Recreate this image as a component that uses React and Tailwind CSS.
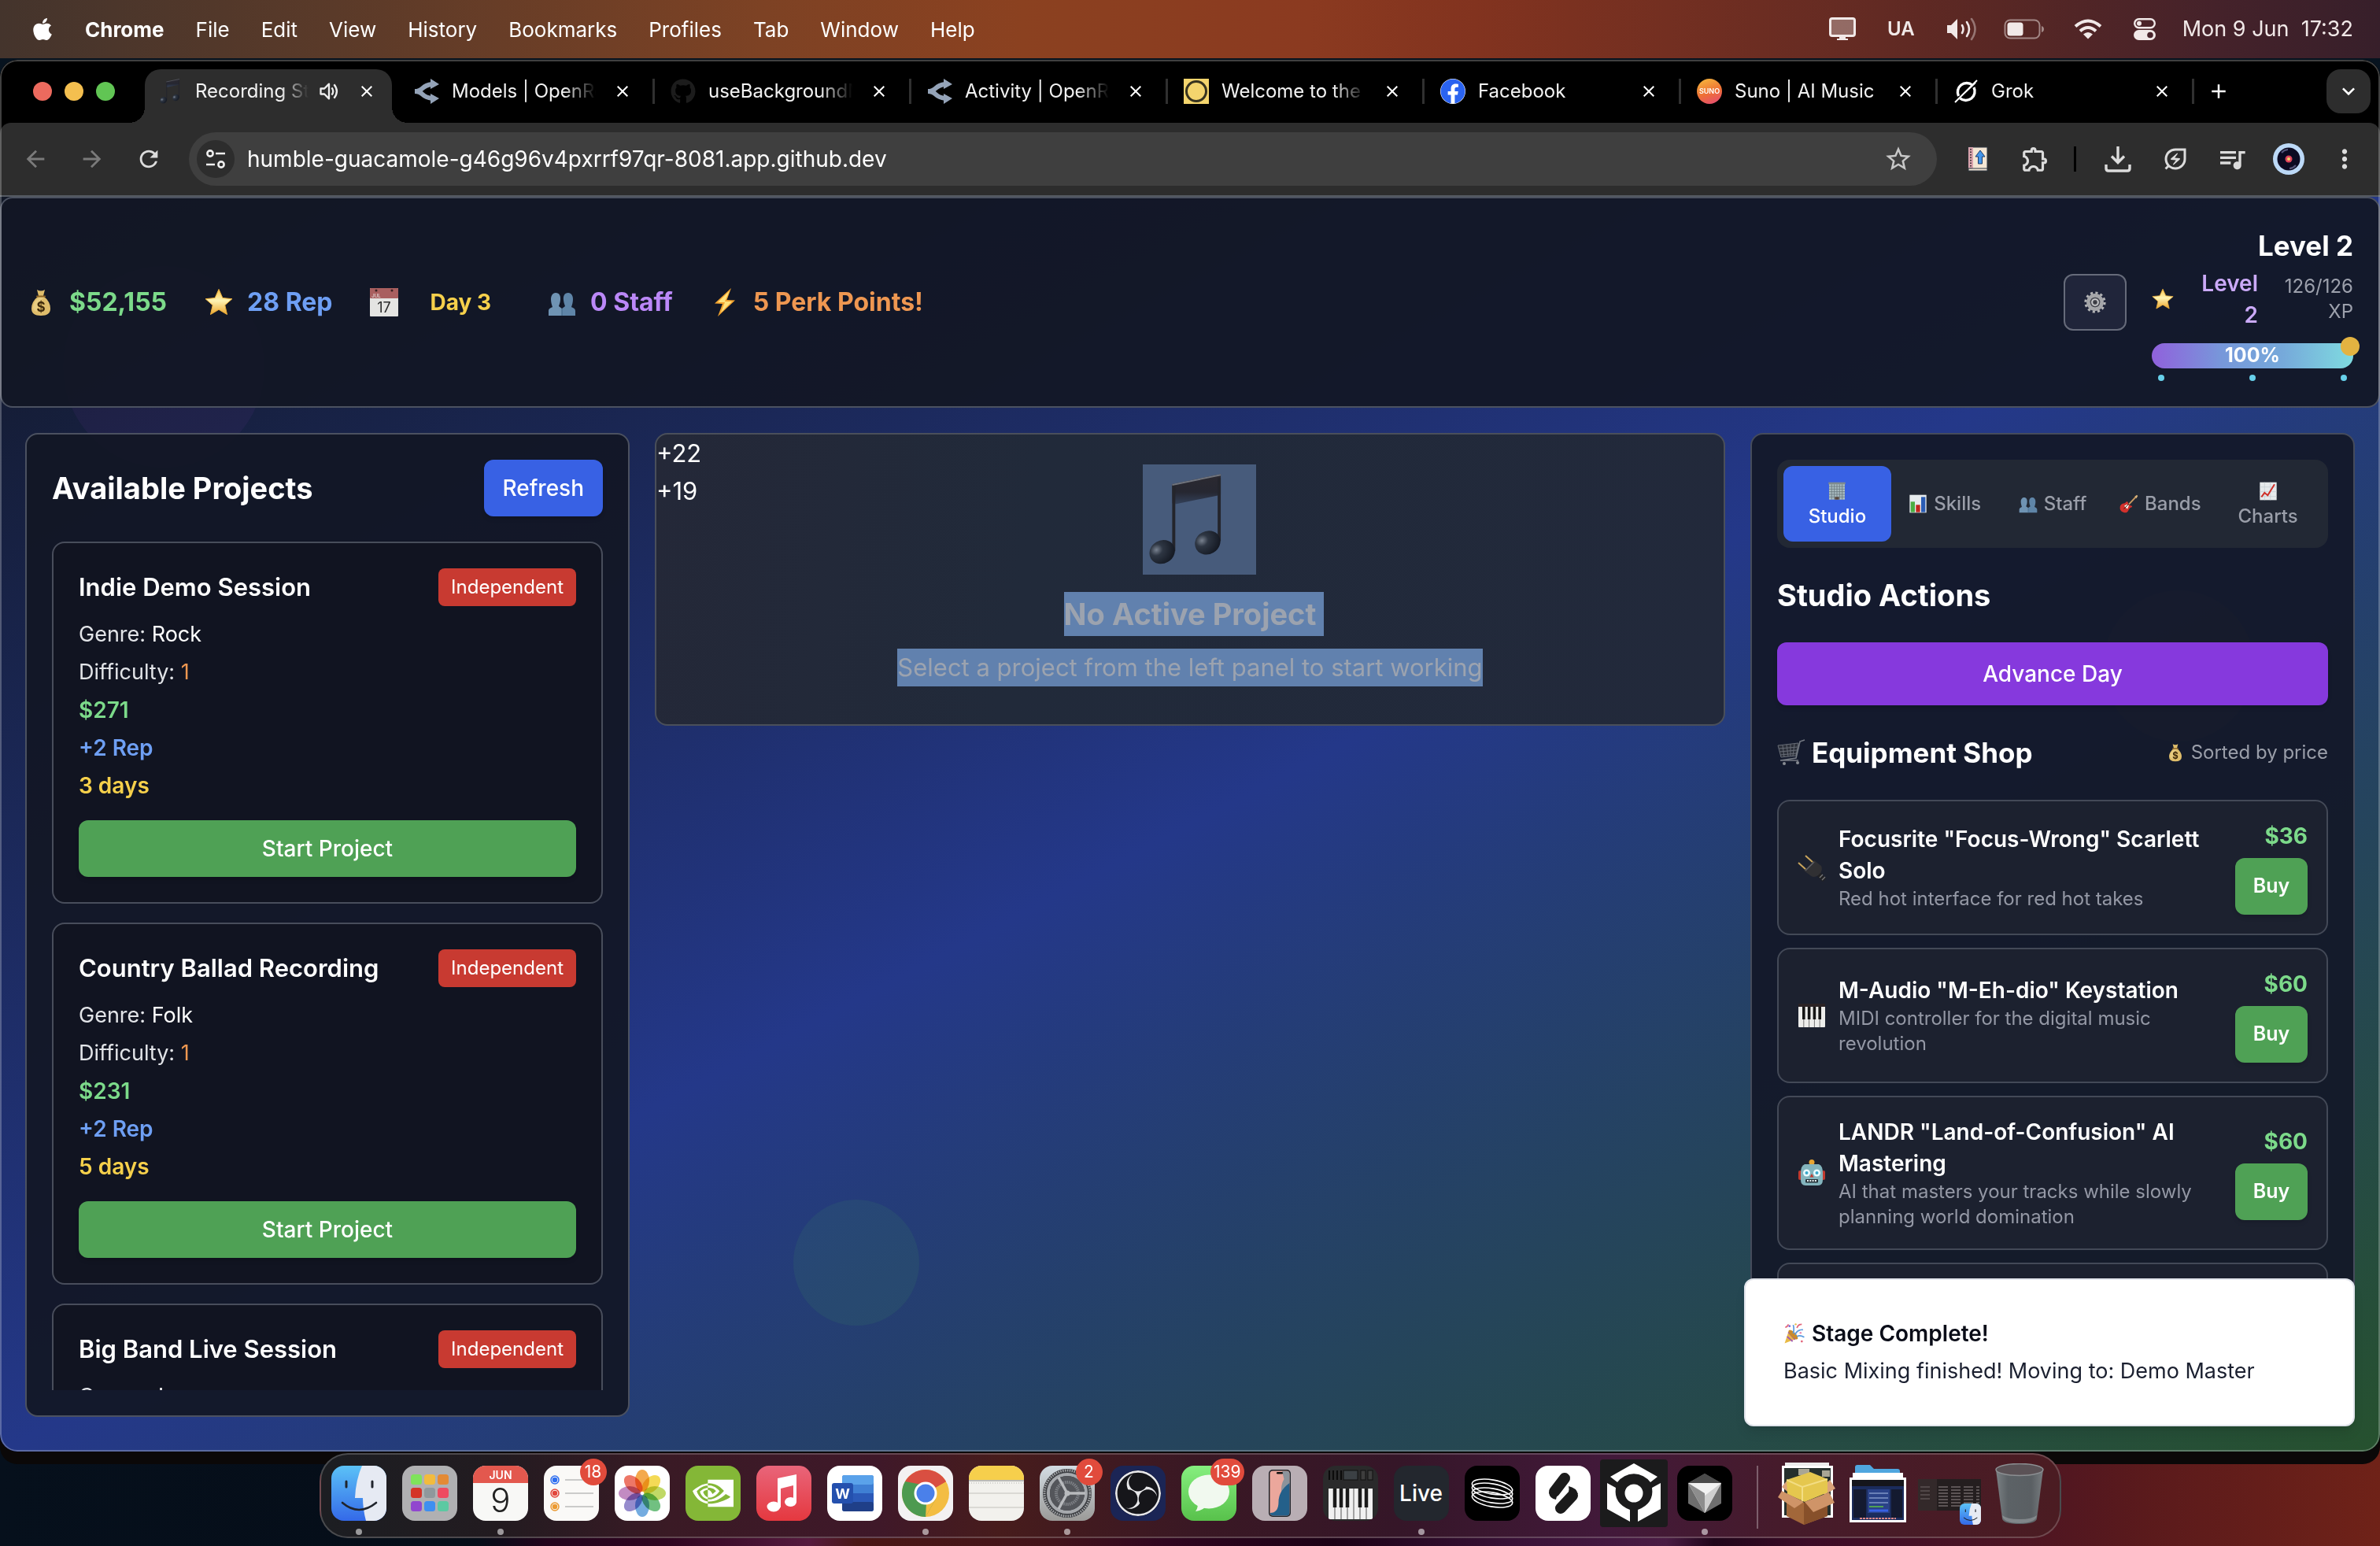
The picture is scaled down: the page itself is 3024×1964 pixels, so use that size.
import React from "react";
import {
  MdArrowBack,
  MdArrowForward,
  MdRefresh,
  MdStarBorder,
  MdOutlineExtension,
  MdOutlineEnergySavingsLeaf,
  MdQueueMusic,
  MdMoreVert,
  MdClose,
  MdAdd,
  MdExpandMore,
} from "react-icons/md";
import { FaApple, FaFacebook, FaGithub } from "react-icons/fa";
import { SiNvidia, SiObsstudio } from "react-icons/si";

/* ---------- small colour pictograms ---------- */

function Pic({ className = "size-9", children, label }) {
  return (
    <svg viewBox="0 0 36 36" className={`shrink-0 ${className}`} role="img" aria-label={label}>
      {children}
    </svg>
  );
}

const MoneyBag = ({ className }) => (
  <Pic className={className} label="money">
    <path d="M13 2q5 3 10 0l-2 8q9 7 9 16 0 9-12 9T6 26q0-9 9-16z" fill="#dfbd6b" />
    <path d="M8 24q1-8 8-12l6 0q-8 5-9 18-5-1-5-6z" fill="#efd791" opacity=".6" />
    <path d="M13 10.500h10" stroke="#8d6526" strokeWidth="2.200" strokeLinecap="round" />
    <text x="18" y="29.500" textAnchor="middle" fontFamily="Inter, sans-serif" fontWeight="700" fontSize="17" fill="#3f2b0c">$</text>
  </Pic>
);
const Star = ({ className }) => (
  <Pic className={className} label="star">
    <defs>
      <linearGradient id="starFill" x1="0" y1="0" x2="0" y2="1">
        <stop offset="0" stopColor="#f6c24a" />
        <stop offset=".45" stopColor="#fdf3b4" />
        <stop offset="1" stopColor="#eda62c" />
      </linearGradient>
    </defs>
    <path d="M18 1.500l4.900 11 12 1.200-9.100 8 2.700 11.800L18 27.300 7.500 33.500l2.700-11.800-9.100-8 12-1.200z" fill="url(#starFill)" stroke="#eeb03a" strokeLinejoin="round" />
  </Pic>
);
const Calendar = ({ className }) => (
  <Pic className={className} label="calendar">
    <rect x="0" y="0" width="36" height="36" rx="1" fill="#e4e4e2" />
    <rect x="0" y="0" width="36" height="13" rx="1" fill="#a95f5f" />
    <circle cx="8" cy="3" r="1.500" fill="#3c2222" />
    <circle cx="28" cy="3" r="1.500" fill="#3c2222" />
    <text x="8" y="12" textAnchor="middle" fontFamily="Inter, sans-serif" fontSize="6" fill="#eee">JUL</text>
    <text x="18" y="31" textAnchor="middle" fontFamily="Inter, sans-serif" fontSize="18" fill="#2c2c2c">17</text>
  </Pic>
);
const People = ({ className }) => (
  <Pic className={className} label="people">
    <g fill="#5f85a8">
      <path d="M10 6c5 0 6.500 4 6 9-.300 4-1.500 6-2 8l4 3v9H1v-6c0-3 3-4 5-5-1-3-2-6-2-10 0-4 2-8 6-8z" fill="#6f93b3" />
      <path d="M26 6c-5 0-6.500 4-6 9 .300 4 1.500 6 2 8l-4 3v9h17v-6c0-3-3-4-5-5 1-3 2-6 2-10 0-4-2-8-6-8z" />
    </g>
    <path d="M18 26v9" stroke="#3f6484" />
  </Pic>
);
const Bolt = ({ className }) => (
  <Pic className={className} label="bolt">
    <path d="M26 0L5 19.500l10 .500L9 36l22-20.500-10.500-.500z" fill="#f3a32e" />
    <path d="M24 3.500L9 18h9l-5 13 14-14h-9z" fill="#ffe27c" />
  </Pic>
);
const Cog = ({ className }) => (
  <Pic className={className} label="settings">
    <circle cx="18" cy="18" r="15.500" fill="none" stroke="#b3b4b6" strokeWidth="4" strokeDasharray="4 4.116" />
    <circle cx="18" cy="18" r="11" fill="none" stroke="#a5a6a9" strokeWidth="6" />
    <circle cx="18" cy="18" r="8" fill="#4a4b52" />
    <circle cx="18" cy="18" r="5" fill="none" stroke="#c9cacc" strokeWidth="2.500" />
    <circle cx="18" cy="18" r="2" fill="#34353c" />
  </Pic>
);
const Building = ({ className }) => (
  <Pic className={className} label="building">
    <rect x="3" y="3" width="30" height="31" fill="#a9bcc1" />
    <rect x="2" y="1" width="32" height="4" fill="#7f8b8f" />
    <path d="M3 9h30M3 14h30M3 19h30M3 24h30M3 29h30M8 5v29M13 5v29M18 5v29M23 5v29M28 5v29" stroke="#6a777d" strokeWidth="1.200" />
    <rect x="14" y="29" width="8" height="5" fill="#5a473d" />
  </Pic>
);
const Bars = ({ className }) => (
  <Pic className={className} label="bar chart">
    <rect x="2" y="1" width="32" height="34" fill="#e7ecee" />
    <rect x="4" y="14" width="8" height="20" fill="#4cae43" />
    <rect x="14" y="20" width="8" height="14" fill="#c1271f" />
    <rect x="24" y="5" width="8" height="29" fill="#2a5cb4" />
  </Pic>
);
const Guitar = ({ className }) => (
  <Pic className={className} label="guitar">
    <path d="M18 19L31 5" stroke="#c89a62" strokeWidth="3" />
    <path d="M29 4l4-3 2 2-3 5z" fill="#d8b37c" />
    <path d="M3 20c2-3 5-2 7-3 2-1 3-4 5-3 2 1 1 4 3 6s5 1 6 3-3 2-5 4c-2 3-3 8-8 8-5 0-10-4-10-8 0-3 0-5 2-7z" fill="#d3312c" />
    <path d="M9 22l6 6 3-7-4-2z" fill="#f4efe8" />
    <path d="M8 28l9-9" stroke="#36241c" strokeWidth="1.500" />
  </Pic>
);
const Trend = ({ className }) => (
  <Pic className={className} label="rising chart">
    <rect x="2" y="1" width="32" height="34" fill="#e6eaec" />
    <path d="M2 10h32M2 19h32M2 28h32M11 1v34M22 1v34" stroke="#c3ccd0" />
    <path d="M5 29l6-8 6 5L30 5" fill="none" stroke="#cf2f28" strokeWidth="3" />
  </Pic>
);
const Cart = ({ className }) => (
  <Pic className={className} label="cart">
    <path d="M1 9l26-3-3 16-19 2z" fill="#2b2f39" stroke="#686d77" />
    <path d="M2 13l24-2M3 17l22-2M4 21l21-2M7 9l2 15M12 8l2 15M17 7v15M22 7l-2 15" stroke="#666b75" strokeWidth="1" />
    <path d="M35 2l-6 2-5 21-20 3h23" fill="none" stroke="#757a83" strokeWidth="1.600" />
    <circle cx="9" cy="32" r="2" fill="#888c93" />
    <circle cx="26" cy="31" r="2" fill="#888c93" />
  </Pic>
);
const Plug = ({ className }) => (
  <Pic className={className} label="plug">
    <path d="M1 12l10 9M10 3l10 9" stroke="#c9a55c" strokeWidth="2" />
    <path d="M8 22l13-13 9 7c2 4 0 9-3 12-4 2-8 3-11 0z" fill="#303033" />
    <path d="M10 22L21 11" stroke="#606166" strokeWidth="1.500" />
    <path d="M27 27l7 7" stroke="#222224" strokeWidth="6" />
    <path d="M28 31l4-4M31 34l4-4" stroke="#77787c" strokeWidth="1.300" />
  </Pic>
);
const Piano = ({ className }) => (
  <Pic className={className} label="keyboard">
    <rect x="1" y="3" width="34" height="30" rx="1" fill="#ededeb" />
    <rect x="1" y="3" width="34" height="4" fill="#2b2325" />
    <path d="M7.800 7v26M14.600 7v26M21.400 7v26M28.200 7v26" stroke="#777" strokeWidth="1" />
    <path d="M7.800 7v16M14.600 7v16M21.400 7v16M28.200 7v16" stroke="#151515" strokeWidth="3.600" />
  </Pic>
);
const Robot = ({ className }) => (
  <Pic className={className} label="robot">
    <circle cx="18" cy="4.500" r="3.500" fill="#e8a532" />
    <rect x="1" y="15" width="4" height="12" rx="2" fill="#c1392e" />
    <rect x="31" y="15" width="4" height="12" rx="2" fill="#c1392e" />
    <path d="M9 7h18q5 2 5 11v9q0 7-6 7H10q-6 0-6-7v-9Q4 9 9 7z" fill="#83b4bd" />
    <circle cx="11.500" cy="18" r="4.500" fill="#e9fbff" />
    <circle cx="24.500" cy="18" r="4.500" fill="#e9fbff" />
    <circle cx="11.500" cy="18" r="2" fill="#38a7c8" />
    <circle cx="24.500" cy="18" r="2" fill="#38a7c8" />
    <path d="M18 19l2.500 4.500h-5z" fill="#c1392e" />
    <rect x="10" y="26" width="16" height="4.500" rx="1" fill="#263238" />
    <path d="M12 28h12" stroke="#e8f4f6" strokeWidth="2" strokeDasharray="2 1.300" />
  </Pic>
);
const Party = ({ className }) => (
  <Pic className={className} label="party">
    <path d="M2 34L9 13q9 4 14 13z" fill="#e8ba45" />
    <path d="M6 23l9 8M8 16l11 12" stroke="#a159b5" strokeWidth="2.500" />
    <ellipse cx="16" cy="20" rx="4" ry="10" transform="rotate(-45 16 20)" fill="#c98a2c" />
    <path d="M16 18q2-7 0-14M19 20q4-9 13-8M22 23q5-3 12 1" fill="none" stroke="#5a9be0" strokeWidth="2.200" />
    <path d="M22 9q2-6 8-6M3 8q4-1 5-5" fill="none" stroke="#e3667c" strokeWidth="2.200" />
    <circle cx="10" cy="6" r="1.800" fill="#7b6bd8" />
    <circle cx="28" cy="17" r="1.700" fill="#e78ab0" />
    <circle cx="30" cy="31" r="1.800" fill="#e3667c" />
    <circle cx="20" cy="3" r="1.500" fill="#e8ba45" />
  </Pic>
);

function MusicNotes({ className }) {
  return (
    <svg viewBox="0 0 96 120" className={`shrink-0 ${className}`} role="img" aria-label="music">
      <defs>
        <linearGradient id="noteBody" x1="0" y1="0" x2="0" y2="1">
          <stop offset="0" stopColor="#2b2930" />
          <stop offset=".6" stopColor="#262731" />
          <stop offset="1" stopColor="#33415a" />
        </linearGradient>
        <radialGradient id="noteHead" cx=".35" cy=".3" r=".7">
          <stop offset="0" stopColor="#78818f" />
          <stop offset=".35" stopColor="#2e3643" />
          <stop offset="1" stopColor="#161b25" />
        </radialGradient>
      </defs>
      <path d="M30 14L93 1v27L34 40v-1h-4z" fill="url(#noteBody)" />
      <path d="M30 14h4v87h-4zM89 6h4v82h-4z" fill="#24252c" />
      <path d="M30 15L93 2" stroke="#70747d" strokeWidth="2" />
      <ellipse cx="17" cy="102" rx="17" ry="15" transform="rotate(-30 17 102)" fill="url(#noteHead)" />
      <ellipse cx="76" cy="90" rx="17" ry="15" transform="rotate(-30 76 90)" fill="url(#noteHead)" />
    </svg>
  );
}

/* ---------- macOS menu bar ---------- */

const MENUS = ["File", "Edit", "View", "History", "Bookmarks", "Profiles", "Tab", "Window", "Help"];

function MenuBar() {
  return (
    <header className="flex h-[74px] shrink-0 items-center justify-between bg-[linear-gradient(90deg,#44342c_0%,#5a3a29_14%,#7d4224_32%,#8b4120_43%,#8b3a20_55%,#82331f_62%,#6c2d22_74%,#582724_84%,#45222a_93%,#371f2a_100%)] pl-[40px] pr-[34px] text-[26px] text-white">
      <nav className="flex items-center gap-10">
        <FaApple className="h-8 w-7" aria-label="Apple" />
        <button className="font-bold">Chrome</button>
        {MENUS.map((m) => (
          <button key={m}>{m}</button>
        ))}
      </nav>
      <div className="flex items-center text-[#f1e9e8]">
        <svg viewBox="0 0 34 30" className="w-[34px]" aria-label="display">
          <rect x="1.500" y="1.500" width="31" height="22" rx="2.500" fill="#ffffff4d" stroke="currentColor" strokeWidth="3" />
          <path d="M13 24h8v3h3v2H10v-2h3z" fill="currentColor" />
        </svg>
        <span className="ml-10 text-[24px] font-semibold">UA</span>
        <svg viewBox="0 0 40 30" className="ml-10 w-[40px]" aria-label="volume" fill="none" stroke="currentColor" strokeWidth="2.600" strokeLinecap="round">
          <path d="M1 10h5l8-8v26l-8-8H1z" fill="currentColor" stroke="none" />
          <path d="M20 10q3 5 0 10M26 6q6 9 0 18" />
          <path d="M32 2q9 13 0 26" opacity=".4" />
        </svg>
        <svg viewBox="0 0 52 26" className="ml-[33px] w-[52px]" aria-label="battery">
          <rect x="1.500" y="1.500" width="44" height="23" rx="6.500" fill="none" stroke="currentColor" strokeWidth="2" opacity=".5" />
          <rect x="4.500" y="4.500" width="20" height="17" rx="3.500" fill="currentColor" />
          <path d="M48 9v8q3-1 3-4t-3-4z" fill="currentColor" opacity=".5" />
        </svg>
        <svg viewBox="0 0 36 26" className="ml-[37px] w-[36px]" aria-label="wifi" fill="none" stroke="currentColor" strokeWidth="4">
          <path d="M2 9.500q16-14 32 0M8 15.500q10-9 20 0" />
          <path d="M18 25.500l-6-6q6-5 12 0z" fill="currentColor" stroke="none" />
        </svg>
        <svg viewBox="0 0 28 28" className="ml-10 w-[28px]" aria-label="control centre">
          <rect x="1.200" y="1.200" width="25.600" height="11" rx="5.500" fill="none" stroke="currentColor" strokeWidth="2.400" />
          <circle cx="7" cy="6.700" r="3" fill="currentColor" />
          <rect x="0" y="15" width="28" height="13" rx="6.500" fill="currentColor" />
          <circle cx="21" cy="21.500" r="3.800" fill="#48242b" />
        </svg>
        <time className="ml-[34px] text-[27px] whitespace-pre">Mon 9 Jun  17:32</time>
      </div>
    </header>
  );
}

/* ---------- browser chrome ---------- */

const RouterMark = () => (
  <svg viewBox="0 0 32 32" className="size-8" aria-hidden="true">
    <path d="M1 16q6 0 10-4t12-5" fill="none" stroke="#94a3b8" strokeWidth="6" />
    <path d="M1 16q6 0 10 4t12 5" fill="none" stroke="#94a3b8" strokeWidth="6" />
    <path d="M21 0l11 7-11 6zM21 19l11 6-11 7z" fill="#94a3b8" />
  </svg>
);
const Ring = () => (
  <svg viewBox="0 0 32 32" className="size-8" aria-hidden="true">
    <rect width="32" height="32" fill="#f4d56d" />
    <circle cx="16" cy="16" r="12.500" fill="none" stroke="#37331f" strokeWidth="3" />
  </svg>
);
const SunoMark = () => (
  <span className="flex size-8 items-center justify-center rounded-full bg-[linear-gradient(160deg,#f3a83b_15%,#ee6f35_55%,#e4477c_100%)] text-[9px] font-semibold text-white">SUNO</span>
);
const GrokMark = () => (
  <svg viewBox="0 0 32 32" className="size-8" aria-hidden="true" fill="none" stroke="#fff" strokeWidth="3.400">
    <path d="M24 8a11.500 11.500 0 0 0-17.500 14M8.500 25A11.500 11.500 0 0 0 26 11" />
    <path d="M2 30L30 2M12 20L28 5" strokeWidth="2" />
  </svg>
);

const FADE = "[mask-image:linear-gradient(to_right,#000_75%,transparent_97%)]";

const TABS = [
  { title: "Models | OpenRouter", icon: <RouterMark />, fade: true },
  { title: "useBackgroundMusic", icon: <FaGithub className="size-8 text-[#1c1c1c]" />, fade: true },
  { title: "Activity | OpenRouter", icon: <RouterMark />, fade: true },
  { title: "Welcome to the d", icon: <Ring />, fade: true },
  { title: "Facebook", icon: <FaFacebook className="size-8 rounded-full bg-white text-[#2a63f0]" /> },
  { title: "Suno | AI Music", icon: <SunoMark /> },
  { title: "Grok", icon: <GrokMark /> },
];

function CloseTab({ title }) {
  return (
    <button aria-label={`Close ${title}`} className="flex size-6 shrink-0 items-center justify-center text-white">
      <MdClose className="size-6" />
    </button>
  );
}

function TabStrip() {
  return (
    <div className="flex h-[80px] shrink-0 bg-black pt-3 text-[24px] text-[#f2f2f2]">
      <div className="flex h-[56px] w-[184px] shrink-0 items-center gap-4 pl-[42px]">
        <button aria-label="Close window" className="size-6 rounded-full bg-[#ec6a5e]" />
        <button aria-label="Minimise" className="size-6 rounded-full bg-[#f4bf4f]" />
        <button aria-label="Zoom" className="size-6 rounded-full bg-[#61c554]" />
      </div>
      <div className="relative mr-3 flex h-[68px] w-[314px] shrink-0 items-center rounded-t-[20px] bg-[#2d2d2d] pr-5 pb-3 pl-4 before:absolute before:-left-5 before:bottom-0 before:size-5 before:bg-[radial-gradient(circle_at_0_0,transparent_20px,#2d2d2d_20px)] after:absolute after:-right-5 after:bottom-0 after:size-5 after:bg-[radial-gradient(circle_at_100%_0,transparent_20px,#2d2d2d_20px)]">
        <span className="flex w-8 justify-center">
          <MusicNotes className="h-8 w-[26px]" />
        </span>
        <button className="ml-4 w-[144px] shrink-0 overflow-hidden text-left whitespace-nowrap [mask-image:linear-gradient(to_right,#000_75%,transparent)]">Recording Studio Tycoon</button>
        <svg viewBox="0 0 24 24" className="mr-auto ml-[12px] size-7" fill="none" stroke="#eee" strokeWidth="2" aria-label="Playing audio">
          <path d="M3 9h4l5-5v16l-5-5H3z" strokeLinejoin="round" />
          <path d="M15 8q3 4 0 8M17.500 4.500q6 7.500 0 15" />
        </svg>
        <CloseTab title="Recording Studio" />
      </div>
      {TABS.map((t, i) => (
        <div key={i} className="flex h-[56px] w-[326px] shrink items-center pl-4">
          <span className="size-8 shrink-0">{t.icon}</span>
          <button className={`ml-4 min-w-0 flex-1 overflow-hidden text-left whitespace-nowrap ${t.fade ? FADE : ""}`}>{t.title}</button>
          <span className="ml-4 flex items-center">
            <CloseTab title={t.title} />
            <span className="mr-[4px] ml-[26px] h-8 w-[3px] bg-[#303030]" />
          </span>
        </div>
      ))}
      <button aria-label="New tab" className="ml-3 flex h-[56px] shrink-0 items-center text-white">
        <MdAdd className="size-[30px]" />
      </button>
      <button aria-label="Search tabs" className="mr-3 ml-auto flex size-[56px] shrink-0 items-center justify-center rounded-[18px] bg-[#2d2d2d] text-white">
        <MdExpandMore className="size-8" />
      </button>
    </div>
  );
}

function Toolbar() {
  return (
    <div className="flex h-[94px] shrink-0 items-center rounded-t-[14px] border-b-2 border-[#555a62] bg-[#2d2d2d] text-[#dcdcdc]">
      <div className="flex w-[240px] shrink-0 items-center gap-[38px] pl-[28px]">
        <MdArrowBack className="size-[34px] text-[#7a7a7a]" aria-label="Back" />
        <MdArrowForward className="size-[34px] text-[#7a7a7a]" aria-label="Forward" />
        <MdRefresh className="size-[34px]" aria-label="Reload" />
      </div>
      <div className="flex h-[68px] min-w-0 flex-1 items-center rounded-full bg-[#3f3f3f] pr-[30px] pl-[10px]">
        <button aria-label="Site information" className="flex size-12 shrink-0 items-center justify-center rounded-full bg-[#2d2d2d]">
          <svg viewBox="0 0 26 26" className="size-[26px]" fill="none" stroke="#eee" strokeWidth="2.600">
            <circle cx="6" cy="6" r="3.600" />
            <path d="M13 6h12M1 20h11" />
            <circle cx="20" cy="20" r="3.600" />
          </svg>
        </button>
        <input aria-label="Address" defaultValue="humble-guacamole-g46g96v4pxrrf97qr-8081.app.github.dev" className="ml-4 min-w-0 flex-1 bg-transparent text-[28px] text-white outline-none" />
        <MdStarBorder className="size-[38px] text-[#c8c8c8]" aria-label="Bookmark" />
      </div>
      <div className="flex shrink-0 items-center pr-[26px] pl-[38px]">
        <svg viewBox="0 0 28 32" className="w-[28px]" aria-label="Notebook extension">
          <rect x="2" y="1" width="24" height="30" fill="#f4e6d4" stroke="#2f3944" />
          <rect x="2" y="1" width="6" height="27" fill="#d9a3ac" />
          <path d="M5 3v25" stroke="#46353b" strokeWidth="2" strokeDasharray="1.500 2" />
          <path d="M17 5l6 8h-3.500v9h-5v-9H11z" fill="#4495ea" stroke="#1c3d68" />
          <path d="M2 28h24" stroke="#2f3944" />
        </svg>
        <MdOutlineExtension className="ml-[40px] size-[38px]" aria-label="Extensions" />
        <span className="ml-[30px] h-8 w-[3px] bg-black" />
        <svg viewBox="0 0 34 34" className="ml-[36px] w-[34px]" fill="none" stroke="currentColor" strokeWidth="3.400" aria-label="Downloads">
          <path d="M17 1v20M9 13.500l8 8 8-8M2 24v5q0 3 3 3h24q3 0 3-3v-5" />
        </svg>
        <MdOutlineEnergySavingsLeaf className="ml-[38px] size-[36px]" aria-label="Energy saver" />
        <MdQueueMusic className="ml-[34px] size-[40px]" aria-label="Media" />
        <svg viewBox="0 0 40 40" className="ml-[32px] w-10" aria-label="Profile">
          <circle cx="20" cy="20" r="20" fill="#bcd9f7" />
          <circle cx="20" cy="20" r="14.500" fill="#0b0a22" />
          <path d="M11 12a12 12 0 0 1 8-4M29 28a12 12 0 0 1-8 4" stroke="#55567a" strokeWidth="2" fill="none" />
          <circle cx="20" cy="20" r="4.500" fill="#e0445c" />
          <circle cx="20" cy="20" r="2" fill="#f4d46a" />
        </svg>
        <MdMoreVert className="ml-[32px] size-[38px]" aria-label="More" />
      </div>
    </div>
  );
}

/* ---------- game page ---------- */

function Stat({ icon, color, className = "", children }) {
  return (
    <div className={`flex items-center gap-[18px] font-bold ${color} ${className}`}>
      {icon}
      <span>{children}</span>
    </div>
  );
}

function StatusHeader() {
  return (
    <section className="relative flex shrink-0 items-center justify-between rounded-2xl border-2 border-[#4b5160] bg-[#121725]/93 px-8 py-8">
      <div className="flex items-center text-[32px]">
        <Stat icon={<MoneyBag className="size-9" />} color="text-[#7cda8a]">$52,155</Stat>
        <Stat icon={<Star className="size-9" />} color="text-[#6e9ff4]" className="ml-12">28 Rep</Stat>
        <Calendar className="ml-12 size-9" />
        <span className="ml-10 text-[28px] font-bold text-[#f6d04b]">Day 3</span>
        <Stat icon={<People className="size-9" />} color="text-[#bb88f8]" className="ml-[72px]">0 Staff</Stat>
        <Stat icon={<Bolt className="size-9" />} color="text-[#ee9751]" className="ml-12">5 Perk Points!</Stat>
      </div>
      <div className="flex items-center gap-8">
        <button aria-label="Settings" className="flex h-[72px] w-20 items-center justify-center rounded-xl border-2 border-[#666b7a] bg-[#20253a]">
          <Cog className="size-7" />
        </button>
        <div className="w-64 text-right">
          <h2 className="text-[35px] leading-[56px] font-bold whitespace-nowrap text-white">Level 2</h2>
          <div className="flex items-center justify-between">
            <Star className="size-7" />
            <span className="ml-1 w-[76px] text-[28px] leading-10 font-semibold text-[#cbaaf9]">Level 2</span>
            <span className="w-[94px] text-[24px] leading-8 text-[#9ca0ac]">126/126 XP</span>
          </div>
          <div className="relative mt-4 flex h-8 items-center justify-center rounded-full bg-[linear-gradient(90deg,#9061dc,#7798da_35%,#76a9da_65%,#7fdbe0)] text-[25px] font-bold text-white">
            100%
            <span className="absolute -top-2 -right-2 size-6 rounded-full bg-[#e3b341]" />
          </div>
          <div className="mt-2 flex justify-between px-2">
            <span className="size-2 rounded-full bg-[#67d0ea]" />
            <span className="size-2 rounded-full bg-[#67d0ea]" />
            <span className="size-2 rounded-full bg-[#67d0ea]" />
          </div>
        </div>
      </div>
    </section>
  );
}

const PROJECTS = [
  { name: "Indie Demo Session", genre: "Rock", pay: "$271", days: "3 days" },
  { name: "Country Ballad Recording", genre: "Folk", pay: "$231", days: "5 days" },
  { name: "Big Band Live Session", genre: "Jazz", pay: "$302", days: "4 days" },
];

function ProjectCard({ p }) {
  return (
    <article className="shrink-0 rounded-2xl border-2 border-[#484d5b] bg-[#111421] p-8">
      <div className="mb-4 flex items-center justify-between">
        <h3 className="text-[31px] leading-[48px] font-semibold text-white">{p.name}</h3>
        <span className="rounded-lg bg-[#c83a31] px-4 text-[24px] leading-[48px] text-white">Independent</span>
      </div>
      <div className="flex flex-col gap-2 text-[28px] leading-10">
        <p className="text-[27px] text-[#e2e4e8]">Genre: <span className="text-white">{p.genre}</span></p>
        <p className="text-[27px] text-[#e2e4e8]">Difficulty: <span className="text-[#ee9751]">1</span></p>
        <p className="font-semibold text-[#7cda8a]">{p.pay}</p>
        <p className="font-semibold text-[#6e9ff4]">+2 Rep</p>
        <p className="font-semibold text-[#f6d04b]">{p.days}</p>
      </div>
      <button className="mt-6 h-[72px] w-full rounded-xl bg-[#4fa155] text-[28px] font-medium text-white shadow-md">Start Project</button>
    </article>
  );
}

function ProjectsPanel() {
  return (
    <section className="flex min-h-0 flex-col rounded-2xl border-2 border-[#4b5160] bg-[#121725]/93 p-8">
      <div className="mb-8 flex items-center justify-between">
        <h2 className="text-[38px] leading-[56px] font-bold text-white">Available Projects</h2>
        <button className="h-[72px] rounded-xl bg-[#3861e4] px-6 text-[28px] font-medium text-white shadow-md">Refresh</button>
      </div>
      <div className="flex min-h-0 flex-1 flex-col gap-6 overflow-hidden">
        {PROJECTS.map((p) => (
          <ProjectCard key={p.name} p={p} />
        ))}
      </div>
    </section>
  );
}

function ActivePanel() {
  return (
    <section className="relative flex flex-col items-center self-start rounded-2xl border-2 border-[#4a4f5a] bg-[linear-gradient(100deg,#242838,#212a3a_35%,#22293b)] p-12">
      <div className="absolute top-0 left-0 text-[31px] leading-[48px] text-white">
        <p>+22</p>
        <p>+19</p>
      </div>
      <div className="mb-8 flex h-[120px] w-[120px] items-center">
        <div className="flex h-[140px] w-36 shrink-0 items-center bg-[#475b7b] pl-2">
          <MusicNotes className="h-[120px] w-[94px]" />
        </div>
      </div>
      <h3 className="mb-4 text-[38px] leading-[56px] font-bold text-[#9ca3af]">
        <span className="-mr-[10px] block bg-[#6181ae] pr-[10px]">No Active Project</span>
      </h3>
      <p className="bg-[#6181ae] text-[31px] leading-[48px] text-[#9ca3af]">Select a project from the left panel to start working</p>
    </section>
  );
}

const SIDE_TABS = [
  { label: "Studio", Icon: Building, stacked: true, active: true },
  { label: "Skills", Icon: Bars },
  { label: "Staff", Icon: People },
  { label: "Bands", Icon: Guitar },
  { label: "Charts", Icon: Trend, stacked: true },
];

const GEAR = [
  { name: 'Focusrite "Focus-Wrong" Scarlett Solo', text: "Red hot interface for red hot takes", price: "$36", Icon: Plug },
  { name: 'M-Audio "M-Eh-dio" Keystation', text: "MIDI controller for the digital music revolution", price: "$60", Icon: Piano },
  { name: 'LANDR "Land-of-Confusion" AI Mastering', text: "AI that masters your tracks while slowly planning world domination", price: "$60", Icon: Robot },
];

const SHOP_CARD = "flex shrink-0 items-center rounded-2xl border-2 border-[#434957] bg-[#1c212f] p-6";

function ShopCard({ item }) {
  return (
    <article className={SHOP_CARD}>
      <item.Icon className="size-9" />
      <div className="ml-4 min-w-0 flex-1 pr-6">
        <h4 className="text-[28px] leading-10 font-semibold text-white">{item.name}</h4>
        <p className="text-[24px] leading-8 text-[#9498a5]">{item.text}</p>
      </div>
      <div className="flex flex-col items-end gap-2">
        <span className="text-[28px] leading-10 font-bold text-[#7cda8a]">{item.price}</span>
        <button className="h-[72px] w-[92px] rounded-xl bg-[#4fa155] text-[25px] font-semibold text-white shadow-md">Buy</button>
      </div>
    </article>
  );
}

function StudioPanel() {
  return (
    <section className="flex min-h-0 flex-col overflow-hidden rounded-2xl border-2 border-[#454b5b] bg-[#131828]/93 p-8">
      <div className="mb-8 grid shrink-0 grid-cols-5 rounded-2xl bg-[#222834] p-2">
        {SIDE_TABS.map(({ label, Icon, stacked, active }) => (
          <button
            key={label}
            className={`flex h-24 items-center justify-center rounded-xl text-[24px] leading-8 font-medium ${stacked ? "flex-col" : "gap-2"} ${active ? "bg-[#3861e4] text-white" : "text-[#9a9ea9]"}`}
          >
            <span className="flex h-8 items-center"><Icon className="size-6" /></span>
            {label}
          </button>
        ))}
      </div>
      <h2 className="mb-8 text-[38px] leading-[56px] font-bold text-white">Studio Actions</h2>
      <button className="mb-8 h-20 shrink-0 rounded-xl bg-[#8639dd] text-[28px] font-medium text-white shadow-md">Advance Day</button>
      <div className="mb-8 flex items-center justify-between">
        <h3 className="flex items-center gap-2 text-[35px] leading-[56px] font-bold text-white">
          <Cart className="size-9" />
          Equipment Shop
        </h3>
        <span className="flex items-center gap-2 text-[24px] text-[#9a9ea9]">
          <MoneyBag className="size-6" />
          Sorted by price
        </span>
      </div>
      <div className="flex min-h-0 flex-1 flex-col gap-4 overflow-hidden">
        {GEAR.map((g) => (
          <ShopCard key={g.name} item={g} />
        ))}
        <article className={SHOP_CARD}>
          <span className="h-[120px]" />
        </article>
      </div>
    </section>
  );
}

function Toast() {
  return (
    <div role="status" className="absolute right-8 bottom-8 flex w-[776px] flex-col gap-2 rounded-xl border-2 border-[#e2e5ec] bg-white p-12 text-[28px] leading-10 text-[#1b2030] shadow-lg">
      <p className="flex items-center gap-2 font-semibold text-[#0a0d18]">
        <Party className="size-7" />
        Stage Complete!
      </p>
      <p className="text-[27px]">Basic Mixing finished! Moving to: Demo Master</p>
    </div>
  );
}

function BrowserWindow() {
  return (
    <div className="relative mt-[2px] flex min-h-0 flex-1 flex-col overflow-hidden rounded-[22px] bg-black">
      <TabStrip />
      <Toolbar />
      <main className="relative flex min-h-0 flex-1 flex-col bg-[linear-gradient(to_bottom_right,#121827,#243889_50%,#26512e)]">
        <span className="absolute top-[88px] left-20 size-64 rounded-full bg-[#8a3dc0]/8" />
        <span className="absolute bottom-40 left-1/3 size-40 rounded-full bg-[#3f9f5a]/12" />
        <span className="absolute top-[500px] right-40 size-48 rounded-full bg-[#d8a93d]/10" />
        <StatusHeader />
        <div className="relative grid min-h-0 flex-1 grid-cols-[768px_minmax(0,1fr)_768px] grid-rows-[minmax(0,1fr)] gap-8 px-8 pt-8 pb-11">
          <ProjectsPanel />
          <ActivePanel />
          <StudioPanel />
        </div>
        <Toast />
      </main>
      <span className="pointer-events-none absolute inset-0 rounded-[22px] border-2 border-white/25" />
    </div>
  );
}

/* ---------- dock ---------- */

const Tile = ({ children, viewBox = "0 0 70 70", bg }) => (
  <svg viewBox={viewBox} className={`size-[70px] rounded-[16px] ${bg}`} aria-hidden="true">
    {children}
  </svg>
);

const FinderFace = ({ className = "size-[70px] rounded-[16px]" }) => (
  <svg viewBox="0 0 70 70" className={className} aria-hidden="true">
    <defs>
      <linearGradient id="finderBlue" x1="0" y1="0" x2="0" y2="1">
        <stop offset="0" stopColor="#5bc2f7" />
        <stop offset="1" stopColor="#3469e8" />
      </linearGradient>
    </defs>
    <rect width="70" height="70" fill="url(#finderBlue)" />
    <path d="M39 0q-8 18-9 41h10q0 14 4 29h26V0z" fill="#e6eaf3" />
    <path d="M19 20v7M52 20v7" stroke="#20242c" strokeWidth="3" strokeLinecap="round" />
    <path d="M14 47q21 18 43 0" fill="none" stroke="#20242c" strokeWidth="2.600" strokeLinecap="round" />
  </svg>
);

const LAUNCH = ["#7fe35b", "#f2bb3d", "#e48a34", "#d43428", "#8f989c", "#ee4b60", "#9147cf", "#3e8ff0", "#5cc9a2"];
const Launchpad = () => (
  <Tile bg="bg-[#b0b0b2]">
    {LAUNCH.map((c, i) => (
      <rect key={c} x={11 + (i % 3) * 17} y={11 + Math.floor(i / 3) * 17} width="14" height="13" rx="3.500" fill={c} />
    ))}
  </Tile>
);
const CalendarApp = () => (
  <Tile bg="bg-[#f8f8f6]">
    <rect width="70" height="22" fill="#e3584e" />
    <text x="35" y="17" textAnchor="middle" fontFamily="Inter, sans-serif" fontWeight="600" fontSize="14" fill="#fff">JUN</text>
    <text x="35" y="59" textAnchor="middle" fontFamily="Inter, sans-serif" fontWeight="300" fontSize="42" fill="#222">9</text>
  </Tile>
);
const Reminders = () => (
  <Tile bg="bg-[#faf9f7]">
    {["#2f6ff0", "#e2463b", "#eb9a32"].map((c, i) => (
      <g key={c}>
        <circle cx="14" cy={18 + i * 17} r="5" fill="none" stroke={c} strokeWidth="1.500" />
        <circle cx="14" cy={18 + i * 17} r="3.300" fill={c} />
        <path d={`M27 ${18 + i * 17}h36`} stroke="#bbb" strokeWidth="1.500" />
      </g>
    ))}
  </Tile>
);
const PETALS = ["#f29a2e", "#f3d438", "#b5d34b", "#58b56b", "#5b9edb", "#8478c4", "#b876b8", "#ea5f4c"];
const Photos = () => (
  <Tile bg="bg-white">
    {PETALS.map((c, i) => (
      <ellipse key={c} cx="35" cy="19" rx="9" ry="14" fill={c} opacity=".85" transform={`rotate(${i * 45} 35 35)`} className="mix-blend-multiply" />
    ))}
  </Tile>
);
const Nvidia = () => (
  <span className="flex size-[70px] items-center justify-center rounded-[16px] bg-[#84b737]">
    <SiNvidia className="size-[52px] text-white" />
  </span>
);
const MusicApp = () => (
  <Tile bg="bg-[linear-gradient(#e9657a,#e5383f)]">
    <path d="M27 16l24-5v35h-4V25l-16 4v24h-4z" fill="#fff" />
    <ellipse cx="22" cy="52" rx="8.500" ry="6.500" fill="#fff" />
    <ellipse cx="43.500" cy="46" rx="7.500" ry="6" fill="#fff" />
  </Tile>
);
const Word = () => (
  <Tile bg="bg-white">
    <rect x="19" y="12" width="40" height="46" rx="3" fill="#3f7fd4" />
    <rect x="19" y="12" width="40" height="12" rx="3" fill="#5aa2ea" />
    <rect x="19" y="35" width="40" height="12" fill="#2b59b8" />
    <rect x="19" y="46" width="40" height="12" rx="3" fill="#1f3f88" />
    <rect x="6" y="22" width="27" height="26" rx="3" fill="#2450ae" />
    <text x="19.500" y="42" textAnchor="middle" fontFamily="Inter, sans-serif" fontWeight="700" fontSize="18" fill="#fff">W</text>
  </Tile>
);
const ChromeApp = () => (
  <Tile bg="bg-[#f3f1f2]">
    <circle cx="35" cy="35" r="30" fill="#f3bd43" />
    <path d="M35 35L9 20a30 30 0 0 1 52 0z" fill="#d94f41" />
    <path d="M35 35L9 20a30 30 0 0 0 26 45l13-23z" fill="#4d9a50" />
    <path d="M35 20h26L35 35z" fill="#d94f41" />
    <path d="M9 20l13 22 8-18z" fill="#4d9a50" />
    <path d="M35 65l13-23-2-6-10 12z" fill="#f3bd43" />
    <circle cx="35" cy="35" r="14.500" fill="#fff" />
    <circle cx="35" cy="35" r="11.500" fill="#4a80ea" />
  </Tile>
);
const Notes = () => (
  <Tile bg="bg-[#f2f1ed]">
    <rect width="70" height="18" fill="#f6cf4c" />
    <path d="M0 19h70" stroke="#a9a9a4" strokeWidth="1.500" />
    <path d="M0 22h70" stroke="#b5b5b0" strokeDasharray="1 2" />
    <path d="M0 35h70M0 53h70" stroke="#d2d1cc" strokeWidth="1.500" />
  </Tile>
);
const SettingsApp = () => (
  <Tile bg="bg-[linear-gradient(#d3dce3,#9b9a98)]">
    <circle cx="35" cy="35" r="31" fill="#3c3e42" />
    <circle cx="35" cy="35" r="29" fill="none" stroke="#a5a7aa" strokeWidth="3" strokeDasharray="1.500 1.400" />
    <circle cx="35" cy="35" r="24" fill="none" stroke="#a6a9ad" strokeWidth="4" />
    <circle cx="35" cy="35" r="22" fill="#54565b" />
    <circle cx="35" cy="35" r="14" fill="none" stroke="#7f8287" strokeWidth="4" strokeDasharray="1.500 1" />
    <path d="M35 35h23M35 35L24 15M35 35L24 55" stroke="#b8babd" strokeWidth="3.500" />
    <circle cx="35" cy="35" r="3.500" fill="#b8babd" />
  </Tile>
);
const Obs = () => (
  <span className="flex size-[70px] items-center justify-center rounded-[16px] bg-[#1b2555]">
    <SiObsstudio className="size-[58px] rounded-full bg-[#16161a] text-[#e8e8ea]" />
  </span>
);
const Messages = () => (
  <Tile bg="bg-[linear-gradient(#86ef7f,#58c14b)]">
    <ellipse cx="35" cy="33" rx="26" ry="21.500" fill="#f1f9ef" />
    <path d="M21 48q0 6-3 10 8-1 12-5z" fill="#f1f9ef" />
  </Tile>
);
const Phone = () => (
  <Tile bg="bg-[#b9aeb4]">
    <rect x="21" y="5" width="28" height="60" rx="5" fill="#20242a" />
    <rect x="22.500" y="6.500" width="25" height="57" rx="4" fill="#eba79c" />
    <path d="M38 7h6q3.500 0 3.500 4v14q-6 3-10 12-2-12 3-20z" fill="#8c939b" />
    <path d="M47.500 22q-14 10-14 24t-11 14q1 3.500 4 3.500h17q4 0 4-4z" fill="#24608a" />
    <rect x="31" y="8" width="8" height="2.500" rx="1.200" fill="#111" />
  </Tile>
);
const Keys = () => (
  <Tile bg="bg-[#2a2a2b]">
    <rect x="26" y="6" width="18" height="12" fill="#3b4044" stroke="#111" />
    <path d="M8 6v12M13 6v12M18 6v12M23 6v12" stroke="#0b0b0b" strokeWidth="2" />
    <rect x="48" y="6" width="6" height="12" fill="#3d3d3d" stroke="#111" />
    <rect x="57" y="6" width="6" height="12" fill="#3d3d3d" stroke="#111" />
    <rect x="7" y="29" width="56" height="39" fill="#f0f0f0" />
    <path d="M15 29v39M23 29v39M31 29v39M39 29v39M47 29v39M55 29v39" stroke="#555" />
    <path d="M15 29v24M23 29v24M31 29v24M47 29v24M55 29v24" stroke="#1a1a1a" strokeWidth="4.500" />
  </Tile>
);
const Live = () => (
  <span className="flex size-[70px] items-center justify-center rounded-[16px] bg-[#23272e] text-[28px] font-medium text-white">Live</span>
);
const Coil = () => (
  <Tile bg="bg-black">
    <g fill="none" stroke="#fff" strokeWidth="1.600">
      <ellipse cx="35" cy="27" rx="26" ry="9" transform="rotate(10 35 27)" />
      <ellipse cx="35" cy="32" rx="26" ry="9" transform="rotate(10 35 32)" />
      <ellipse cx="35" cy="38" rx="26" ry="9" transform="rotate(10 35 38)" />
      <ellipse cx="35" cy="43" rx="26" ry="9" transform="rotate(10 35 43)" />
    </g>
  </Tile>
);
const Splice = () => (
  <Tile bg="bg-white">
    <g stroke="#1b1b1b" strokeWidth="14" strokeLinecap="round" fill="none">
      <path d="M37 16L24 33M47 38L32 54" />
    </g>
    <path d="M17 34q1 8 9 9 1-6 4-10zM54 36q-2-8-12-10 2 8-4 14z" fill="#1b1b1b" />
  </Tile>
);
const Cube = () => (
  <svg viewBox="0 0 86 86" className="-m-2 size-[86px] max-w-none" aria-hidden="true">
    <rect width="86" height="86" rx="4" fill="#1b1b1c" />
    <path d="M43 5l30 17-9 7a26 26 0 0 0-42 0l-9-7zM9 30l11 6q-3 20 18 28v15L9 63zM77 30l-11 6q3 20-18 28v15l29-16z" fill="#fff" />
    <circle cx="43" cy="43" r="11.500" fill="#fff" />
  </svg>
);
const Gem = () => (
  <Tile bg="bg-black">
    <path d="M35 10l21 12v26L35 60 14 48V22z" fill="#6e6e6e" />
    <path d="M14 22h42L35 60z" fill="#f2f2f2" />
    <path d="M14 22l21 13v25z" fill="#8d8d8d" />
    <path d="M56 22L35 60V38z" fill="#cfcfcf" />
    <path d="M35 10l21 12H14z" fill="#4b4b4b" />
  </Tile>
);

const APPS = [
  { name: "Finder", Icon: FinderFace, on: true },
  { name: "Launchpad", Icon: Launchpad },
  { name: "Calendar", Icon: CalendarApp, on: true },
  { name: "Reminders", Icon: Reminders, badge: "18" },
  { name: "Photos", Icon: Photos },
  { name: "NVIDIA", Icon: Nvidia },
  { name: "Music", Icon: MusicApp },
  { name: "Word", Icon: Word },
  { name: "Chrome", Icon: ChromeApp, on: true },
  { name: "Notes", Icon: Notes },
  { name: "System Settings", Icon: SettingsApp, badge: "2", on: true },
  { name: "OBS", Icon: Obs },
  { name: "Messages", Icon: Messages, badge: "139" },
  { name: "iPhone Mirroring", Icon: Phone },
  { name: "MIDI Keys", Icon: Keys },
  { name: "Live", Icon: Live, on: true },
  { name: "Coil", Icon: Coil },
  { name: "Splice", Icon: Splice },
  { name: "Cube", Icon: Cube },
  { name: "Cursor", Icon: Gem, on: true },
];

const Downloads = () => (
  <svg viewBox="0 0 76 80" className="h-20 w-[76px]" aria-hidden="true">
    <rect x="9" y="0" width="56" height="10" fill="#ececec" />
    <rect x="5" y="4" width="65" height="66" fill="#fff" />
    <rect x="8" y="7" width="59" height="60" fill="#26302d" />
    <path d="M26 8h14v8H26zM56 10h10v8H56z" fill="#a9a695" />
    <path d="M12 22l-7 9 12 10 8-10zM66 22l7 11-14 8-5-8z" fill="#dca37a" />
    <path d="M11 22l30-10 22 9v17L34 50 12 40z" fill="#e5c74e" />
    <path d="M11 22l20 9 32-10M31 31v18" stroke="#f3dd83" strokeWidth="2" fill="none" />
    <path d="M11 40l22 11 30-9v26L33 79 11 68z" fill="#a2673a" />
    <path d="M33 51v28l30-11V42z" fill="#87502a" />
    <path d="M5 36l28 14-12 8L0 44zM34 50l31-12 7 13-27 12z" fill="#cf9468" />
  </svg>
);
const Shots = () => (
  <svg viewBox="0 0 74 76" className="h-[76px] w-[74px]" aria-hidden="true">
    <path d="M8 4q0-3 3-3h16l5 5h30q3 0 3 3v10H8z" fill="#4fa6df" />
    <rect x="5" y="11" width="64" height="8" fill="#fff" />
    <rect x="1" y="17" width="72" height="57" fill="#fff" />
    <rect x="4" y="20" width="66" height="51" fill="#1b2c5c" />
    <rect x="4" y="20" width="66" height="8" fill="#15161c" />
    <rect x="6" y="32" width="16" height="36" fill="#141a30" />
    <rect x="24" y="32" width="28" height="30" fill="#2a4288" />
    <rect x="54" y="32" width="14" height="36" fill="#141a30" />
    <path d="M26 37h24M26 43h24M26 49h24" stroke="#7f95c6" strokeWidth="1.500" />
    <path d="M26 54h18" stroke="#4fa155" strokeWidth="2" />
    <path d="M26 59h24" stroke="#3861e4" strokeWidth="3" />
    <path d="M14 69h46" stroke="#d88" strokeWidth="2" strokeDasharray="3 1" />
  </svg>
);
const MiniWindow = () => (
  <span className="relative block h-[58px] w-20">
    <svg viewBox="0 0 80 40" className="h-10 w-20" aria-hidden="true">
      <rect width="80" height="40" fill="#33292a" />
      <rect x="24" width="56" height="40" fill="#241e1f" />
      <path d="M26 10h52M26 14h52M26 18h52M26 22h52M26 26h52M26 30h52M26 34h52" stroke="#6f6768" strokeWidth="1.300" strokeDasharray="12 4" />
      <path d="M3 10h12M3 15h12M3 20h12M3 25h12" stroke="#5c5253" strokeWidth="1.500" />
    </svg>
    <FinderFace className="absolute right-0 bottom-0 size-[27px] rounded-md" />
  </span>
);
const Trash = () => (
  <svg viewBox="0 0 62 78" className="h-[78px] w-[62px]" aria-hidden="true">
    <defs>
      <linearGradient id="binBody" x1="0" y1="0" x2="1" y2="0">
        <stop offset="0" stopColor="#7b8184" />
        <stop offset=".25" stopColor="#5c6266" />
        <stop offset=".75" stopColor="#5a5f63" />
        <stop offset="1" stopColor="#777c7f" />
      </linearGradient>
    </defs>
    <path d="M1 8l8 62q1 7 22 7t22-7l8-62z" fill="url(#binBody)" />
    <path d="M9 66q1 10 22 10t22-10q-6 5-22 5T9 66z" fill="#9ba0a3" opacity=".6" />
    <ellipse cx="31" cy="8" rx="30" ry="7.500" fill="#5b5256" stroke="#8c8f92" strokeWidth="1.500" />
  </svg>
);

function Dock() {
  return (
    <footer className="relative mx-auto mt-[2px] mb-[10px] flex h-[108px] shrink-0 items-start rounded-[36px] border-2 border-white/20 bg-[linear-gradient(90deg,#1c1e22_0%,#221b20_10%,#3a1a25_20%,#3f1829_32%,#471c1c_39%,#3a1824_50%,#351628_62%,#42193a_74%,#461b2b_84%,#4b1c22_100%)] pt-[14px] pr-[20px] pl-[13px]">
      <div className="flex gap-5">
        {APPS.map(({ name, Icon, badge, on }) => (
          <button key={name} aria-label={name} className="relative size-[70px]">
            <Icon />
            {badge && (
              <span className="absolute -top-[9px] -right-[10px] flex h-[34px] min-w-[34px] items-center justify-center rounded-full bg-[#e14b3c] px-1 text-[21px] text-white">{badge}</span>
            )}
            {on && <span className="absolute -bottom-[18px] left-[31px] size-2 rounded-full bg-white/55" />}
          </button>
        ))}
      </div>
      <span className="ml-[31px] h-20 w-[2px] shrink-0 bg-white/30" />
      <div className="-mt-1 flex h-20 items-center gap-[14px] pl-[25px]">
        <Downloads />
        <Shots />
        <span className="pt-5"><MiniWindow /></span>
        <span className="pl-[4px]"><Trash /></span>
      </div>
    </footer>
  );
}

export default function App() {
  return (
    <div className="relative flex h-screen flex-col overflow-hidden bg-[#07131f] font-['Inter','Liberation_Sans',sans-serif]">
      <div className="absolute inset-x-0 bottom-0 h-40 bg-[linear-gradient(90deg,#06101c_0%,#050d18_20%,#23041c_23%,#2f0520_28%,#561a3e_34%,#4a1715_36%,#43141a_44%,#300620_49%,#1c0216_56%,#3a1238_64%,#4a1c44_70%,#20061a_72%,#3c0b27_76%,#4b1424_84%,#5a1a1c_90%,#6f2218_100%)]" />
      <div className="absolute inset-x-0 bottom-[104px] h-16 rounded-b-[22px] bg-[#0b0808]" />
      <div className="relative flex min-h-0 flex-1 flex-col">
        <MenuBar />
        <BrowserWindow />
        <Dock />
      </div>
    </div>
  );
}
